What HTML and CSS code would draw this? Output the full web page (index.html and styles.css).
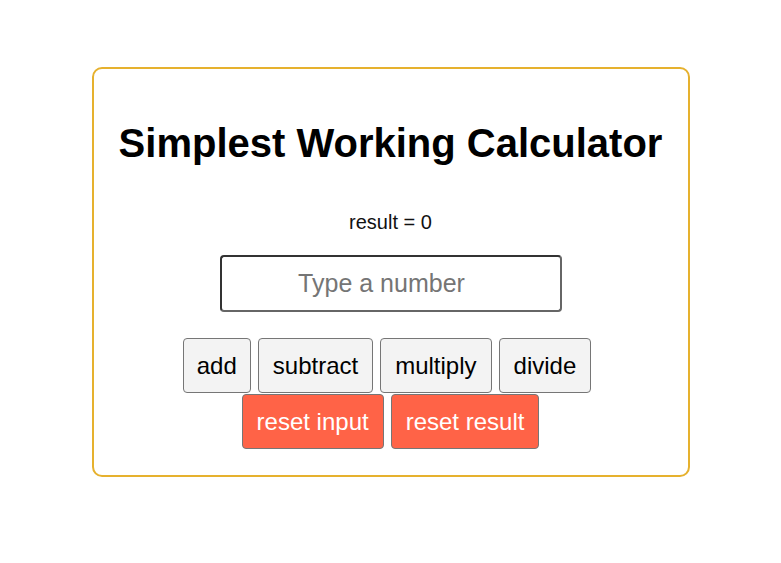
FILE: index.html
```html
<!DOCTYPE html>
<html>
<head>
<meta charset="utf-8">
<link rel="stylesheet" href="styles.css">
</head>
<body>
<div class="card">
  <h1 class="title">Simplest Working Calculator</h1>
  <p class="result">result = 0</p>
  <input class="num" type="text" placeholder="Type a number">
  <div class="row first">
    <button class="btn">add</button>
    <button class="btn">subtract</button>
    <button class="btn">multiply</button>
    <button class="btn">divide</button>
  </div>
  <div class="row second">
    <button class="btn red">reset input</button>
    <button class="btn red">reset result</button>
  </div>
</div>
</body>
</html>
```
FILE: styles.css
```css
html, body { margin: 0; padding: 0; background: #fff; }
body { font-family: "Liberation Sans", Arial, sans-serif; padding-top: 67px; }
.card {
  box-sizing: border-box;
  width: 598px;
  height: 410px;
  margin: 0 auto;
  border: 2px solid #e6b12e;
  border-radius: 10px;
  display: flex;
  flex-direction: column;
  align-items: center;
}
.title {
  margin: 52px 0 0;
  font-size: 40px;
  font-weight: bold;
  line-height: 44px;
  color: #000;
}
.result {
  margin: 45px 0 0;
  font-size: 20px;
  line-height: 24px;
  color: #111;
}
.num {
  box-sizing: border-box;
  margin-top: 21px;
  width: 342px;
  height: 57px;
  padding: 0 18px 0 0;
  border: 2px solid #333;
  border-bottom-color: #666;
  border-right-color: #666;
  border-radius: 4px;
  font-family: inherit;
  font-size: 25px;
  text-align: center;
  outline: none;
}
.num::placeholder { color: #757575; }
.row { display: flex; gap: 7px; justify-content: center; }
.row.first { margin-top: 26px; padding-right: 7px; }
.row.second { margin-top: 1px; }
.btn {
  box-sizing: border-box;
  height: 55px;
  padding: 0 14px;
  border: 1px solid #767676;
  border-radius: 4px;
  background: #f3f3f3;
  font-family: inherit;
  font-size: 24px;
  color: #000;
}
.btn:first-child { padding: 0 13px; }
.btn.red { background: #ff6347; color: #fff; padding: 0 14px; }
```
